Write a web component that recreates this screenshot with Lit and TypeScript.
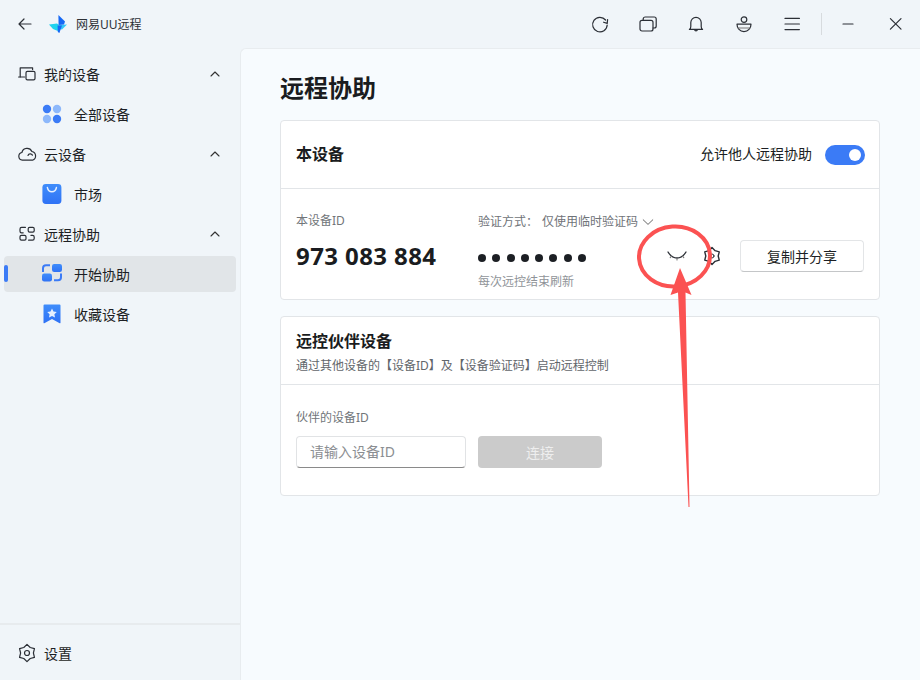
import { LitElement, css, html, svg } from "lit";
import { customElement } from "lit/decorators.js";

const outline = (body: unknown, size = 20) => html`<svg
	width=${size}
	height=${size}
	viewBox="0 0 20 20"
	fill="none"
	stroke="#2b2f36"
	stroke-width="1.2"
	stroke-linecap="round"
	stroke-linejoin="round"
>${body}</svg>`;

const chevronUp = html`<svg class="chev" width="12" height="12" viewBox="0 0 12 12" fill="none" stroke="#333" stroke-width="1.1" stroke-linecap="round" stroke-linejoin="round"><path d="M2 8 L6 4 L10 8" /></svg>`;

// six lobed outline, shared by both gear icons
function gearPath(outer: number, inner: number) {
	const points: string[] = [];
	for (let i = 0; i < 12; i++) {
		const angle = (Math.PI / 6) * i - Math.PI / 2;
		const r = i % 2 === 0 ? outer : inner;
		points.push(`${(10 + r * Math.cos(angle)).toFixed(2)} ${(10 + r * Math.sin(angle)).toFixed(2)}`);
	}
	return `M${points.join(" L")} Z`;
}

const icons = {
	back: outline(svg`<path d="M16 10H4M9 5 4 10 9 15" stroke-width="1.2" />`),
	refresh: outline(svg`<path d="M15.6 6a7.3 7.3 0 1 0 1.6 5" /><path d="M17.6 5.6 17.2 9.4 13.6 8.2" />`),
	windows: outline(svg`<rect x="2" y="6.4" width="13" height="10.6" rx="2" /><path d="M5.2 6.4V5a2 2 0 0 1 2-2h9a2 2 0 0 1 2 2v7a2 2 0 0 1-2 2h-1.2" />`),
	bell: outline(svg`<path d="M3.4 15.4c1-.7 1.4-1.8 1.4-3V8.6a5.2 5.2 0 0 1 10.4 0v3.8c0 1.2.4 2.3 1.4 3z" /><path d="M8.6 15.6c.2 1.6 2.6 1.6 2.8 0" />`),
	user: outline(svg`<circle cx="10" cy="5.6" r="2.8" /><path d="M3 10.2h14c0 4-2.9 7.4-7 7.4s-7-3.4-7-7.4z" /><path d="M4 14h12" stroke="#777" />`),
	menu: outline(svg`<path d="M3 4.4h14.4M3 10h14.4M3 15.6h14.4" />`),
	min: outline(svg`<path d="M5 10h10" />`),
	close: outline(svg`<path d="M4.4 4.6 15 15.2M15 4.6 4.4 15.2" />`),
	devices: outline(svg`<path d="M15.6 5.6V3.8H3.2v9.2" /><path d="M1.6 13h6" /><rect x="9" y="7.4" width="9" height="8.4" rx="1.4" />`),
	cloud: outline(svg`<path d="M5.4 16.2a3.9 3.9 0 0 1-.5-7.7 5.3 5.3 0 0 1 10-1 4.5 4.5 0 0 1 .6 8.7z" /><path d="M11 11.5a2.4 2.4 0 0 1 4.4-.4" />`),
	remote: outline(svg`<path d="M8.4 3.4H4.6a1.6 1.6 0 0 0-1.6 1.6v2.2a1.6 1.6 0 0 0 1.6 1.6h1.6" /><rect x="11.2" y="3.4" width="6" height="4.8" rx="1.4" /><rect x="3" y="11.4" width="6" height="4.8" rx="1.4" /><path d="M11.6 16.2h4a1.6 1.6 0 0 0 1.6-1.6v-1.6a1.6 1.6 0 0 0-1.6-1.6H14" />`),
	gear: outline(svg`<path d=${gearPath(8.6, 6.4)} stroke-width="1.2" /><circle cx="10" cy="10" r="2.5" />`),
	cog: outline(svg`<path d=${gearPath(8.4, 6.2)} stroke-width="1.4" /><circle cx="10" cy="10" r="2" stroke-width="1" />`),
	eye: outline(svg`<path d="M1 4c2.4 4 5.4 6 9 6s6.6-2 9-6" stroke-width="1.3" /><path d="M10 10v2M4.6 8 3.2 9.6M15.4 8l1.4 1.6" stroke="#777" stroke-width="1.1" />`),
	chevDown: html`<svg class="verify-chev" width="12" height="12" viewBox="0 0 12 12" fill="none" stroke="#666" stroke-width="1" stroke-linecap="round" stroke-linejoin="round"><path d="M1.2 3.8 L6 8.4 L10.8 3.8" /></svg>`
};

const logo = html`<svg width="18" height="18" viewBox="0 0 18 18">
	<path d="M0 9.6 8 8.6 10 10 8.8 16 4 14z" fill="#1fd3ee" />
	<path d="M10 10 18 9.6 13 14.6 10.4 14z" fill="#33c6f6" />
	<path d="M9.4 0 16 6.4 15 9.4 9.6 10z" fill="#1668f5" />
	<path d="M8.6 10.6 13 10.4 10.4 18 8.8 17z" fill="#1668f5" />
</svg>`;

const gradient = (id: string) => svg`<defs><linearGradient id=${id} x1="0" y1="0" x2="0" y2="1"><stop offset="0" stop-color="#3f8dfb" /><stop offset="1" stop-color="#2f72f5" /></linearGradient></defs>`;

const colorIcons = {
	all: html`<svg width="20" height="20" viewBox="0 0 20 20">
		<circle cx="5" cy="5" r="4.2" fill="#3b7bf6" />
		<circle cx="15" cy="5" r="4.2" fill="#8db8fb" />
		<circle cx="5" cy="15" r="4.2" fill="#8db8fb" />
		<circle cx="15" cy="15" r="4.2" fill="#3b7bf6" />
	</svg>`,
	market: html`<svg width="20" height="20" viewBox="0 0 20 20">
		${gradient("m")}
		<rect x="0.4" y="0" width="19" height="20" rx="3.4" fill="url(#m)" />
		<path d="M5.4 3.6c.6 3 2.4 4.2 4.5 4.2s3.9-1.2 4.5-4.2" fill="none" stroke="#e6f0ff" stroke-width="1.5" stroke-linecap="round" />
	</svg>`,
	start: html`<svg width="20" height="20" viewBox="0 0 20 20">
		${gradient("s")}
		<path d="M8 1.2H4a3 3 0 0 0-3 3v3.8" fill="none" stroke="#3b7bf6" stroke-width="2" />
		<rect x="10" y="0" width="10" height="8" rx="2.2" fill="url(#s)" />
		<rect x="0" y="9.5" width="10" height="8" rx="2.2" fill="url(#s)" />
		<path d="M12 16.2h4a3 3 0 0 0 3-3v-3.7" fill="none" stroke="#3b7bf6" stroke-width="2" />
	</svg>`,
	fav: html`<svg width="20" height="20" viewBox="0 0 20 20">
		${gradient("f")}
		<path d="M1.5 1.5a1 1 0 0 1 1-1h15a1 1 0 0 1 1 1v17.3a.5.5 0 0 1-.8.4L10 15l-7.700 4.200a.5.5 0 0 1-.8-.4z" fill="url(#f)" />
		<path d="M10 4.4 11.5 7.5 14.8 7.9 12.4 10.2 13 13.5 10 11.9 7 13.5 7.6 10.2 5.2 7.9 8.5 7.5z" fill="#e6f0ff" />
	</svg>`
};

@customElement("app-root")
export class AppRoot extends LitElement {
	protected navSection(icon: unknown, label: string) {
		return html`<div class="nav-row">
			<span class="nav-icon">${icon}</span>
			<span class="nav-label">${label}</span>
			${chevronUp}
		</div>`;
	}

	protected navChild(icon: unknown, label: string, active = false) {
		return html`<div class="nav-child ${active ? "active" : ""}">
			<span class="child-icon">${icon}</span>
			<span class="nav-label">${label}</span>
		</div>`;
	}

	render() {
		return html`
			<div class="titlebar">
				<span class="back">${icons.back}</span>
				<span class="logo">${logo}</span>
				<span class="app-name">网易UU远程</span>
				<span class="spacer"></span>
				<div class="tools">
					${[icons.refresh, icons.windows, icons.bell, icons.user, icons.menu].map(
						(icon) => html`<span class="tool">${icon}</span>`
					)}
				</div>
				<span class="vline"></span>
				<span class="win">${icons.min}</span>
				<span class="win">${icons.close}</span>
			</div>
			<div class="body">
				<aside class="sidebar">
					<nav class="nav">
						${this.navSection(icons.devices, "我的设备")}
						${this.navChild(colorIcons.all, "全部设备")}
						${this.navSection(icons.cloud, "云设备")}
						${this.navChild(colorIcons.market, "市场")}
						${this.navSection(icons.remote, "远程协助")}
						${this.navChild(colorIcons.start, "开始协助", true)}
						${this.navChild(colorIcons.fav, "收藏设备")}
					</nav>
					<div class="settings">
						<span class="nav-icon">${icons.gear}</span>
						<span class="nav-label">设置</span>
					</div>
				</aside>
				<main class="main">
					<h1>远程协助</h1>
					<section class="card">
						<header class="card-head device-head">
							<h2>本设备</h2>
							<div class="allow">
								<span>允许他人远程协助</span>
								<span class="switch"><span class="knob"></span></span>
							</div>
						</header>
						<div class="device-body">
							<div class="id-col">
								<div class="caption">本设备ID</div>
								<div class="device-id">973 083 884</div>
							</div>
							<div class="code-col">
								<div class="verify">
									<span>验证方式：</span>
									<span class="verify-mode">仅使用临时验证码</span>
									${icons.chevDown}
								</div>
								<div class="dots">
									${Array.from({ length: 8 }, () => html`<i></i>`)}
								</div>
								<div class="hint">每次远控结束刷新</div>
							</div>
							<div class="actions">
								<span class="eye">${icons.eye}</span>
								<span class="cog">${icons.cog}</span>
								<button class="share">复制并分享</button>
							</div>
						</div>
					</section>
					<section class="card partner">
						<header class="card-head partner-head">
							<h2>远控伙伴设备</h2>
							<p>通过其他设备的【设备ID】及【设备验证码】启动远程控制</p>
						</header>
						<div class="partner-body">
							<div class="caption">伙伴的设备ID</div>
							<div class="connect-row">
								<div class="input">请输入设备ID</div>
								<button class="connect">连接</button>
							</div>
						</div>
					</section>
				</main>
			</div>
			<svg class="mark" width="920" height="680" viewBox="0 0 920 680" fill="none">
				<ellipse cx="674.5" cy="256.5" rx="35.5" ry="30" stroke="#fb5252" stroke-width="4" transform="rotate(-4 674.5 256.5)" />
				<path d="M680 268 L670.5 295 L678 292.5 L688.5 507 L689.5 507 L685.5 292.5 L691.5 295 Z" fill="#fb5252" />
			</svg>
		`;
	}

	static styles = css`
		:host {
			display: block;
			position: relative;
			width: 920px;
			height: 680px;
			overflow: hidden;
			background: #f0f5f9;
			color: #1c1f24;
			font-family: "Noto Sans", "Noto Sans CJK SC", sans-serif;
			font-size: 14px;
		}
		.titlebar {
			display: flex;
			align-items: center;
			height: 48px;
			padding-left: 15px;
		}
		.back {
			display: flex;
			width: 34px;
		}
		.logo {
			display: flex;
			width: 27px;
		}
		.app-name {
			font-size: 12px;
			color: #2c3036;
		}
		.spacer {
			flex: 1;
		}
		.tools {
			display: flex;
			gap: 28px;
		}
		.tool {
			display: flex;
			width: 20px;
			height: 20px;
		}
		.vline {
			width: 1px;
			height: 22px;
			margin: 0 16px 0 19px;
			background: #d7dbde;
		}
		.win {
			display: flex;
			margin-right: 14px;
			width: 20px;
		}
		.win + .win {
			margin-left: 14px;
			margin-right: 14px;
		}
		.body {
			display: flex;
			height: 632px;
		}
		.sidebar {
			display: flex;
			flex-direction: column;
			justify-content: space-between;
			width: 240px;
			flex: none;
		}
		.nav {
			display: flex;
			flex-direction: column;
			padding-top: 6px;
		}
		.nav-row,
		.nav-child {
			display: flex;
			align-items: center;
			height: 40px;
		}
		.nav-row {
			padding: 0 18px 0 17px;
		}
		.nav-icon {
			display: flex;
			width: 27px;
		}
		.nav-label {
			flex: 1;
			font-size: 14px;
		}
		.chev {
			margin-right: 1px;
		}
		.nav-child {
			position: relative;
			padding-left: 42px;
		}
		.child-icon {
			display: flex;
			width: 32px;
		}
		.nav-child.active::before {
			content: "";
			position: absolute;
			left: 4px;
			right: 4px;
			top: 2px;
			height: 36px;
			border-radius: 4px;
			background: #e1e5e8;
		}
		.nav-child.active::after {
			content: "";
			position: absolute;
			left: 4px;
			top: 11px;
			width: 4px;
			height: 17px;
			border-radius: 2px;
			background: #3b7bf6;
		}
		.nav-child.active > * {
			position: relative;
			z-index: 1;
		}
		.settings {
			display: flex;
			align-items: center;
			height: 55px;
			padding: 0 0 0 17px;
			border-top: 2px solid #e7ebee;
		}
		.main {
			flex: 1;
			padding: 0 40px 0 39px;
			background: #f7fbfe;
			border-left: 1px solid #e8ecef;
			border-top: 1px solid #e8ecef;
			border-top-left-radius: 6px;
		}
		h1 {
			margin: 19px 0 13px;
			height: 39px;
			font-size: 24px;
			line-height: 39px;
			font-weight: 700;
			color: #1a1c20;
		}
		.card {
			background: #fff;
			border: 1px solid #e2e5e8;
			border-radius: 4px;
			height: 180px;
			box-sizing: border-box;
		}
		.partner {
			margin-top: 16px;
		}
		.card-head {
			box-sizing: border-box;
			height: 68px;
			padding: 0 15px;
			border-bottom: 1px solid #e2e5e8;
		}
		.device-head {
			display: flex;
			align-items: center;
			justify-content: space-between;
			padding: 0 14px 3px 15px;
		}
		h2 {
			margin: 0;
			font-size: 16px;
			font-weight: 700;
			color: #1a1c20;
		}
		.allow {
			display: flex;
			align-items: center;
			gap: 13px;
			font-size: 14px;
		}
		.switch {
			display: flex;
			justify-content: flex-end;
			align-items: center;
			box-sizing: border-box;
			width: 40px;
			height: 20px;
			padding-right: 4px;
			border-radius: 10px;
			background: #3b7bf6;
			transform: translateY(2px);
		}
		.knob {
			width: 12px;
			height: 12px;
			border-radius: 50%;
			background: #fff;
		}
		.device-body {
			display: flex;
			height: 110px;
			padding: 0 15px;
		}
		.id-col {
			width: 182px;
			padding-top: 24px;
		}
		.caption {
			font-size: 12px;
			line-height: 16px;
			color: #71757a;
		}
		.device-id {
			margin-top: 12px;
			font-size: 24px;
			line-height: 30px;
			letter-spacing: 0.4px;
			font-weight: 700;
			color: #1a1c20;
			white-space: nowrap;
		}
		.code-col {
			width: 170px;
			flex: none;
			padding-top: 24px;
			font-size: 12px;
			color: #6f7378;
		}
		.verify {
			display: flex;
			align-items: center;
			line-height: 18px;
			white-space: nowrap;
		}
		.verify-mode {
			margin: 0 4px;
		}
		.verify-chev {
			flex: none;
		}
		.dots {
			display: flex;
			gap: 6.3px;
			margin-top: 23px;
			height: 8px;
		}
		.dots i {
			width: 8px;
			height: 8px;
			border-radius: 50%;
			background: #1c1f24;
		}
		.hint {
			margin-top: 11px;
			color: #909499;
			line-height: 18px;
			white-space: nowrap;
		}
		.actions {
			display: flex;
			align-items: center;
			flex: 1;
			height: 32px;
			margin-top: 51px;
			justify-content: flex-end;
		}
		.eye {
			display: flex;
			margin-right: 15px;
			transform: translateY(2px);
		}
		.cog {
			display: flex;
			margin-right: 18px;
		}
		.share {
			width: 124px;
			height: 32px;
			padding: 0;
			font: inherit;
			font-size: 14px;
			color: #1c1f24;
			background: #fff;
			border: 1px solid #e3e5e7;
			border-bottom-color: #c4c6c8;
			border-radius: 4px;
		}
		.partner-head {
			padding-top: 13px;
		}
		.partner-head h2 {
			line-height: 22px;
		}
		.partner-head p {
			margin: 5px 0 0;
			font-size: 12px;
			line-height: 18px;
			color: #62666b;
			white-space: nowrap;
		}
		.partner-body {
			padding: 25px 15px 0;
		}
		.connect-row {
			display: flex;
			gap: 12px;
			margin-top: 10px;
		}
		.input {
			box-sizing: border-box;
			width: 170px;
			height: 32px;
			padding-left: 13px;
			font-size: 14px;
			line-height: 30px;
			color: #8b8e92;
			background: #fff;
			border: 1px solid #e1e3e5;
			border-bottom-color: #8a8a8a;
			border-radius: 4px;
		}
		.connect {
			width: 124px;
			height: 32px;
			padding: 0;
			font: inherit;
			font-size: 14px;
			color: #eeeeee;
			background: #cbcbcb;
			border: none;
			border-radius: 4px;
		}
		.mark {
			position: absolute;
			left: 0;
			top: 0;
			pointer-events: none;
		}
	`;
}
